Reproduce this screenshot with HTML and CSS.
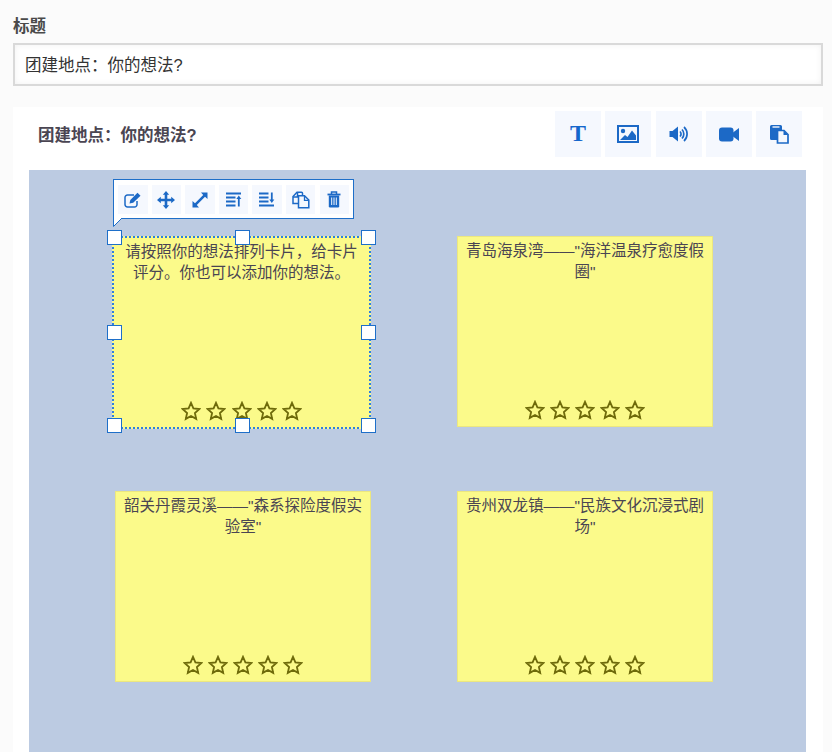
FILE: index.html
```html
<!DOCTYPE html>
<html lang="zh">
<head>
<meta charset="utf-8">
<title>标题</title>
<link rel="stylesheet" href="styles.css">
</head>
<body>
<svg class="defs" width="0" height="0" aria-hidden="true">
  <symbol id="star" viewBox="0 0 20 20"><path d="M10 1.800l2.400 5.500 6 .7-4.500 4 1.300 5.900L10 15l-5.200 2.900 1.300-5.900-4.500-4 6-.7z" fill="none" stroke="currentColor" stroke-width="1.800" stroke-linejoin="miter"/></symbol>
</svg>
<main class="page">
  <label class="field-label" for="title">标题</label>
  <input class="title-input" id="title" value="团建地点：你的想法?">
  <section class="panel">
    <header class="panel-head">
      <h2 class="panel-title">团建地点：你的想法?</h2>
      <div class="tools">
        <button class="tool"><span class="tool-t">T</span></button>
        <button class="tool"><svg width="22" height="18" viewBox="0 0 22 18"><rect x="1" y="1" width="20" height="16" fill="none" stroke="currentColor" stroke-width="2"/><circle cx="6" cy="6" r="2.200" fill="currentColor"/><path d="M3 15l5-5 2.500 2L15 5.500l4 5V15z" fill="currentColor"/></svg></button>
        <button class="tool"><svg width="20" height="18" viewBox="0 0 20 18"><path d="M0.500 6h3L9 1.500v15L3.500 12h-3z" fill="currentColor"/><path d="M11 6.500a3.500 3.500 0 0 1 0 5M13 4.500a6.500 6.500 0 0 1 0 9M15 2a9.500 9.500 0 0 1 0 14" fill="none" stroke="currentColor" stroke-width="1.700"/></svg></button>
        <button class="tool"><svg width="20" height="15" viewBox="0 0 20 15"><rect x="0" y="0.500" width="14.500" height="14" rx="3" fill="currentColor"/><path d="M14 5.500l6-4.500v13l-6-4.500z" fill="currentColor"/></svg></button>
        <button class="tool"><svg width="20" height="20" viewBox="0 0 20 20"><path d="M1 2.500A1.500 1.500 0 0 1 2.500 1h9A1.500 1.500 0 0 1 13 2.500V6H8.500v10H2.500A1.500 1.500 0 0 1 1 14.500z" fill="currentColor"/><rect x="3.500" y="2.300" width="7" height="1.400" fill="#f5f8fe"/><path d="M8.500 6.500h6.500l4 4V19H8.500z" fill="#f5f8fe" stroke="currentColor" stroke-width="1.700"/><path d="M14.500 6.500V11H19z" fill="currentColor"/></svg></button>
      </div>
    </header>
    <div class="canvas">
      <article class="note note-a selected">
        <p class="note-text">请按照你的想法排列卡片，给卡片评分。你也可以添加你的想法。</p>
        <div class="stars"><svg class="star"><use href="#star"/></svg><svg class="star"><use href="#star"/></svg><svg class="star"><use href="#star"/></svg><svg class="star"><use href="#star"/></svg><svg class="star"><use href="#star"/></svg></div>
      </article>
      <article class="note note-b">
        <p class="note-text">青岛海泉湾——"海洋温泉疗愈度假圈"</p>
        <div class="stars"><svg class="star"><use href="#star"/></svg><svg class="star"><use href="#star"/></svg><svg class="star"><use href="#star"/></svg><svg class="star"><use href="#star"/></svg><svg class="star"><use href="#star"/></svg></div>
      </article>
      <article class="note note-c">
        <p class="note-text">韶关丹霞灵溪——"森系探险度假实验室"</p>
        <div class="stars"><svg class="star"><use href="#star"/></svg><svg class="star"><use href="#star"/></svg><svg class="star"><use href="#star"/></svg><svg class="star"><use href="#star"/></svg><svg class="star"><use href="#star"/></svg></div>
      </article>
      <article class="note note-d">
        <p class="note-text">贵州双龙镇——"民族文化沉浸式剧场"</p>
        <div class="stars"><svg class="star"><use href="#star"/></svg><svg class="star"><use href="#star"/></svg><svg class="star"><use href="#star"/></svg><svg class="star"><use href="#star"/></svg><svg class="star"><use href="#star"/></svg></div>
      </article>

      <span class="handle h-tl"></span><span class="handle h-tc"></span><span class="handle h-tr"></span>
      <span class="handle h-ml"></span><span class="handle h-mr"></span>
      <span class="handle h-bl"></span><span class="handle h-bc"></span><span class="handle h-br"></span>

      <div class="popover">
        <button class="mini"><svg width="18" height="16" viewBox="0 0 18 16"><path d="M10 3H3.500A2.500 2.500 0 0 0 1 5.500v7A2.500 2.500 0 0 0 3.500 15h7a2.500 2.500 0 0 0 2.500-2.500V9" fill="none" stroke="currentColor" stroke-width="1.500"/><path d="M5.500 11.500l.8-3.500L13.500 0.800l3 3L9.200 10.800z" fill="currentColor"/></svg></button>
        <button class="mini"><svg width="18" height="18" viewBox="0 0 18 18"><path d="M9 0l3.200 3.800H10.300V7.700h3.900V5.800L18 9l-3.800 3.200V10.300H10.300v3.900h1.900L9 18l-3.200-3.800h1.900V10.300H3.800v1.900L0 9l3.800-3.200v1.900h3.900V3.800H5.800z" fill="currentColor"/></svg></button>
        <button class="mini"><svg width="16" height="16" viewBox="0 0 16 16"><path d="M9 0.500H15.500V7L13 4.800 4.800 13 7 15.500H0.500V9L3 11.200 11.200 3z" fill="currentColor"/></svg></button>
        <button class="mini"><svg width="16" height="15" viewBox="0 0 16 15"><path d="M0 1.500h15M0 5.500h9.500M0 9.500h9.500M0 13.500h9.500" stroke="currentColor" stroke-width="1.800" fill="none"/><path d="M12.800 14.500V6" stroke="currentColor" stroke-width="1.800"/><path d="M10.300 7L12.800 3.500 15.300 7z" fill="currentColor"/></svg></button>
        <button class="mini"><svg width="16" height="15" viewBox="0 0 16 15"><path d="M0 1.500h9.500M0 5.500h9.500M0 9.500h9.500M0 13.500h15" stroke="currentColor" stroke-width="1.800" fill="none"/><path d="M12.800 0.500v8" stroke="currentColor" stroke-width="1.800"/><path d="M10.300 7.500L12.800 11 15.300 7.500z" fill="currentColor"/></svg></button>
        <button class="mini"><svg width="18" height="18" viewBox="0 0 18 18"><path d="M6.500 12.500H1V5.500L5 1.200h4.500a1 1 0 0 1 1 1V4.500" fill="none" stroke="currentColor" stroke-width="1.500"/><path d="M5.500 1.500V6H1" fill="none" stroke="currentColor" stroke-width="1.500"/><path d="M6.500 4.800h6l4.300 4.200v7.800H6.500z" fill="#f5f8fe" stroke="currentColor" stroke-width="1.500"/><path d="M12.500 5v4.300h4" fill="none" stroke="currentColor" stroke-width="1.300"/></svg></button>
        <button class="mini"><svg width="14" height="17" viewBox="0 0 14 17"><path d="M0.500 3.500h13" stroke="currentColor" stroke-width="1.800"/><path d="M4.500 3V1h5v2" fill="none" stroke="currentColor" stroke-width="1.500"/><path d="M1.800 4.500h10.400v10.800a1.200 1.200 0 0 1-1.200 1.200H3a1.200 1.200 0 0 1-1.200-1.200z" fill="currentColor"/><path d="M4.700 6.500v7.500M7 6.500v7.500M9.300 6.500v7.500" stroke="#f5f8fe" stroke-width="1"/></svg></button>
        <svg class="tail" width="14" height="10" viewBox="0 0 14 10"><path d="M0.500 0V8.500L9 0" fill="#fff" stroke="#1e6fc9" stroke-width="1"/></svg>
      </div>
    </div>
  </section>
</main>
</body>
</html>
```
FILE: styles.css
```css
html, body {
  margin: 0;
  height: 100%;
  overflow: hidden;
}
body {
  background: #fbfbfb;
  font-family: "Liberation Sans", "Noto Sans CJK SC", sans-serif;
  color: #4a4552;
}
.defs { position: absolute; }
.page {
  height: 752px;
  padding: 16px 9px 0 13px;
  box-sizing: border-box;
  display: flex;
  flex-direction: column;
}
.field-label {
  font-size: 16.500px;
  line-height: 20px;
  font-weight: 700;
  color: #4a4a4a;
  margin-bottom: 7px;
}
.title-input {
  display: block;
  height: 43px;
  box-sizing: border-box;
  border: 2px solid #d9d9d9;
  background: #fff;
  box-shadow: inset 0 0 6px #f1f1f1;
  padding: 0 10px 2px;
  font: 16.500px/20px "Liberation Sans", "Noto Sans CJK SC", sans-serif;
  color: #333;
  outline: none;
}
.panel {
  margin-top: 21px;
  flex: 1;
  background: #fff;
  padding: 0 17px 0 16px;
  display: flex;
  flex-direction: column;
  min-height: 0;
}
.panel-head {
  height: 63px;
  display: flex;
  align-items: flex-start;
  justify-content: space-between;
  padding: 4px 4px 0 9px;
  box-sizing: border-box;
  flex: none;
}
.panel-title {
  margin: 13px 0 0;
  font-size: 16.500px;
  line-height: 22px;
  font-weight: 700;
  color: #4a4552;
}
.tools { display: flex; gap: 4.250px; }
.tool {
  width: 46px;
  height: 46px;
  border: 0;
  padding: 0;
  background: #f5f8fe;
  color: #1c69c6;
  display: flex;
  align-items: center;
  justify-content: center;
}
.tool-t {
  font: 700 24px/1 "Liberation Serif", serif;
  color: #1567cc;
  margin-top: -3px;
}
.canvas {
  position: relative;
  flex: 1;
  background: #bccbe2;
  overflow: hidden;
}
.note {
  position: absolute;
  box-sizing: border-box;
  background: #fbfa8a;
  border: 1px solid #ece77f;
  width: 256px;
  height: 191px;
  padding: 4px 6px 0;
  text-align: center;
  color: #4a4552;
}
.note-a { left: 83px; top: 66px; width: 259px; height: 193px; }
.note-b { left: 428px; top: 66px; }
.note-c { left: 86px; top: 321px; }
.note-d { left: 428px; top: 321px; }
.note-text {
  margin: 0;
  font-size: 15.500px;
  line-height: 20.500px;
}
.selected {
  border: 2px dotted #2f7fe0;
}
.stars {
  position: absolute;
  left: 0;
  right: 0;
  bottom: 6px;
  display: flex;
  justify-content: center;
  gap: 5.200px;
  color: #6e6a0a;
}
.star { width: 20px; height: 20px; display: block; }
.handle {
  position: absolute;
  width: 15px;
  height: 15px;
  box-sizing: border-box;
  background: #fff;
  border: 1.500px solid #1e6fc9;
}
.h-tl { left: 78px; top: 60px; }
.h-tc { left: 206px; top: 60px; }
.h-tr { left: 332px; top: 60px; }
.h-ml { left: 78px; top: 155px; }
.h-mr { left: 332px; top: 155px; }
.h-bl { left: 78px; top: 248px; }
.h-bc { left: 206px; top: 248px; }
.h-br { left: 332px; top: 248px; }
.popover {
  position: absolute;
  left: 84px;
  top: 9px;
  width: 241px;
  height: 40px;
  box-sizing: border-box;
  background: #fff;
  border: 1px solid #1e6fc9;
  display: flex;
  gap: 4.100px;
  padding: 5px 4px 4px 4px;
}
.mini {
  width: 29.500px;
  height: 29px;
  border: 0;
  padding: 0;
  background: #f5f8fe;
  color: #1c69c6;
  display: flex;
  align-items: center;
  justify-content: center;
  flex: none;
}
.tail {
  position: absolute;
  left: -1px;
  top: 38px;
}
```
